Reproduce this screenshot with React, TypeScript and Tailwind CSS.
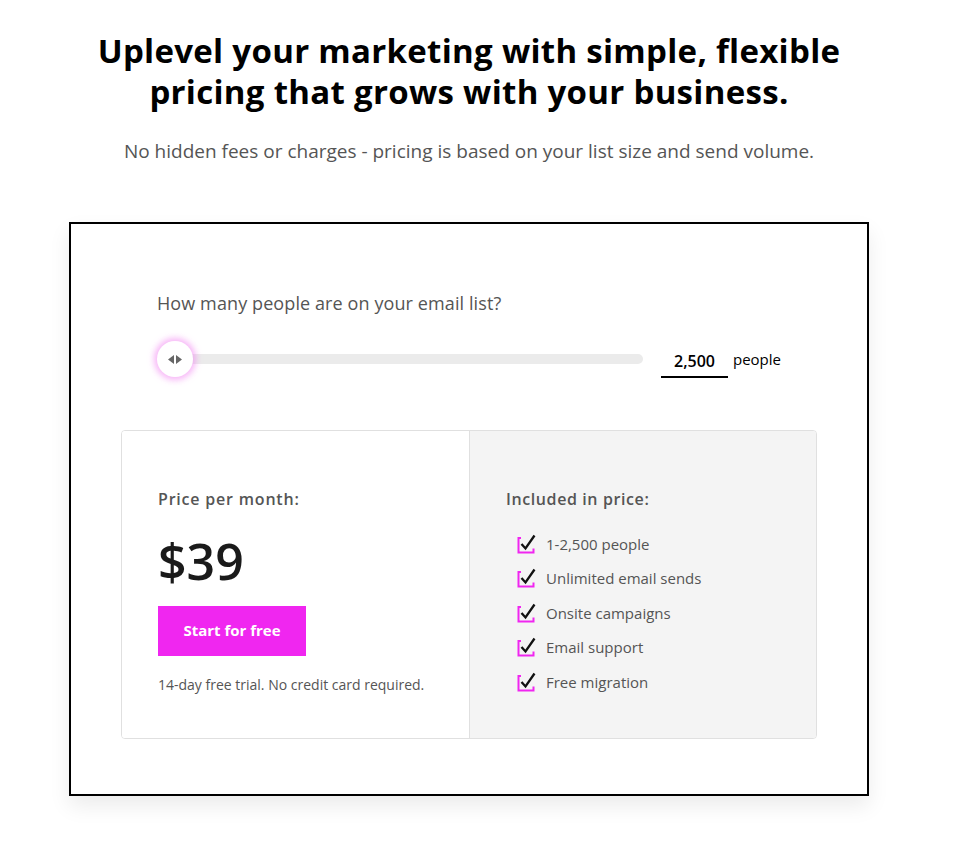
const features = [
  '1-2,500 people',
  'Unlimited email sends',
  'Onsite campaigns',
  'Email support',
  'Free migration',
]

function CheckIcon() {
  return (
    <svg width="20" height="20" viewBox="0 0 20 20" className="shrink-0">
      <path d="M4 4 H1.5 V18.5 H16.5 V14.5" fill="none" stroke="#f026f0" strokeWidth="2" />
      <path d="M4.5 10 L8.5 14.5 L17.5 1.5" fill="none" stroke="#111" strokeWidth="2.3" />
    </svg>
  )
}

function SliderThumb() {
  return (
    <div className="flex h-9 w-9 shrink-0 items-center justify-center gap-[2px] rounded-full bg-white shadow-[0_0_6px_3px_rgba(240,120,240,0.55)]">
      <svg width="6" height="9" viewBox="0 0 6 9">
        <path d="M6 0 L0 4.5 L6 9 Z" fill="#666" />
      </svg>
      <svg width="6" height="9" viewBox="0 0 6 9">
        <path d="M0 0 L6 4.5 L0 9 Z" fill="#666" />
      </svg>
    </div>
  )
}

export default function App() {
  return (
    <div className="min-h-[851px] w-[938px] bg-white pt-[30px] font-['Open_Sans',sans-serif]">
      <header className="text-center">
        <h1 className="text-[33px] font-bold leading-[41px] tracking-[0.3px] text-black">
          Uplevel your marketing with simple, flexible
          <br />
          pricing that grows with your business.
        </h1>
        <p className="mt-[25px] text-[19px] text-[#555]">
          No hidden fees or charges - pricing is based on your list size and send volume.
        </p>
      </header>

      <section className="mx-auto mt-[56px] w-[800px] border-2 border-black bg-white px-[50px] pb-[55px] pt-[66px] shadow-[0_10px_20px_rgba(0,0,0,0.08)]">
        <p className="pl-[36px] text-[18px] tracking-[0.1px] text-[#555]">How many people are on your email list?</p>

        <div className="mt-[24px] flex items-center pl-[36px]">
          <div className="relative flex w-[486px] items-center">
            <div className="absolute left-[18px] right-0 h-[10px] rounded-full bg-[#ebebeb]" />
            <div className="relative">
              <SliderThumb />
            </div>
          </div>
          <div className="ml-[18px] mt-[8px] w-[67px] border-b-2 border-black pb-[3px] text-center text-[16px] font-semibold text-black">
            2,500
          </div>
          <span className="ml-[5px] text-[15px] text-black">people</span>
        </div>

        <div className="mt-[52px] grid grid-cols-2 overflow-hidden rounded-[4px] border border-[#e0e0e0]">
          <div className="bg-white px-[36px] pb-[43px] pt-[56px]">
            <p className="text-[16px] font-semibold tracking-[0.8px] text-[#555]">Price per month:</p>
            <p className="mt-[20px] text-[50px] font-semibold leading-[60px] text-[#1a1a1a]">$39</p>
            <button className="mt-[15px] h-[50px] w-[148px] bg-[#f026f0] text-[15px] font-bold text-white">
              Start for free
            </button>
            <p className="mt-[18px] text-[14px] text-[#555]">14-day free trial. No credit card required.</p>
          </div>
          <div className="border-l border-[#e0e0e0] bg-[#f4f4f4] px-[36px] pt-[56px]">
            <p className="text-[16px] font-semibold tracking-[0.6px] text-[#555]">Included in price:</p>
            <ul className="mt-[23px] flex flex-col gap-[14.5px] pl-[11px]">
              {features.map((feature) => (
                <li key={feature} className="flex items-center gap-[9px] text-[15px] leading-[20px] text-[#555]">
                  <CheckIcon />
                  {feature}
                </li>
              ))}
            </ul>
          </div>
        </div>
      </section>
    </div>
  )
}
